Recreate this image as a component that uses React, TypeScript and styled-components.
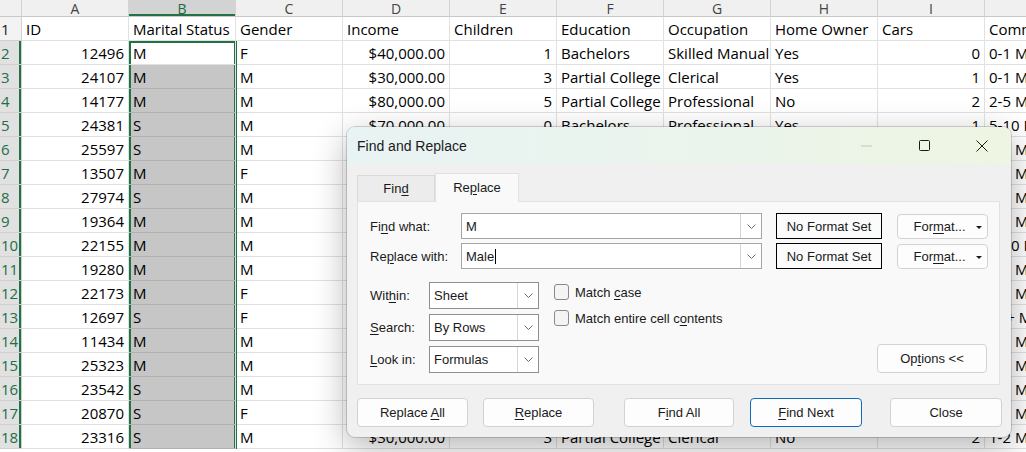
import React from 'react';
import styled, { createGlobalStyle } from 'styled-components';

const GlobalStyle = createGlobalStyle`
  html, body {
    margin: 0;
    padding: 0;
    background: #ffffff;
  }
  body {
    font-family: 'Open Sans', 'Liberation Sans', sans-serif;
  }
`;

// Spreadsheet

const Page = styled.div`
  position: relative;
  width: 1026px;
  height: 452px;
  overflow: hidden;
  background: #ffffff;
`;

const Sheet = styled.div`
  display: grid;
  grid-template-columns: 22px repeat(10, 107px);
  grid-template-rows: 17px repeat(18, 24px);
  font-family: 'Open Sans', 'Liberation Sans', sans-serif;
  font-size: 15px;
  color: #000000;
`;

const Corner = styled.div`
  background: #f0f0f0;
  border-right: 1px solid #d4d4d4;
  border-bottom: 1px solid #c8c8c8;
`;

const ColHeader = styled.div<{ $active?: boolean }>`
  display: flex;
  align-items: center;
  justify-content: center;
  font-size: 14px;
  line-height: 15px;
  color: ${p => (p.$active ? '#1d6b40' : '#444444')};
  background: ${p => (p.$active ? '#d3d3d3' : '#f0f0f0')};
  border-right: 1px solid #d4d4d4;
  border-bottom: 1px solid #c8c8c8;
  box-shadow: ${p => (p.$active ? 'inset 0 -2px 0 #217346' : 'none')};
`;

const RowHeader = styled.div<{ $selected?: boolean }>`
  display: flex;
  align-items: center;
  padding-left: 1px;
  font-size: 15px;
  color: ${p => (p.$selected ? '#1e6e48' : '#222222')};
  background: ${p => (p.$selected ? '#e1e1e1' : '#f3f3f3')};
  border-bottom: 1px solid #d0d0d0;
  border-right: 1px solid #d0d0d0;
  box-shadow: ${p => (p.$selected ? 'inset -2px 0 0 #217346' : 'none')};
`;

type CellProps = {
  $right?: boolean;
  $selected?: boolean;
  $activeCell?: boolean;
  $firstSelected?: boolean;
};

const Cell = styled.div<CellProps>`
  position: relative;
  display: flex;
  align-items: center;
  justify-content: ${p => (p.$right ? 'flex-end' : 'flex-start')};
  padding: 0 4px;
  overflow: hidden;
  white-space: nowrap;
  border-right: 1px solid #e1e1e1;
  border-bottom: 1px solid ${p => (p.$selected && !p.$activeCell ? '#b1b1b1' : '#e1e1e1')};
  background: ${p => (p.$selected && !p.$activeCell ? '#c6c6c6' : '#ffffff')};
  ${p =>
    p.$selected &&
    `
    z-index: 1;
    overflow: visible;
    box-shadow: inset 2px 0 0 #217346, inset -1px 0 0 #217346, 1px 0 0 #217346${
      p.$firstSelected ? ', inset 0 2px 0 #217346' : ''
    };
  `}
`;

// Dialog

const Dialog = styled.div`
  position: absolute;
  left: 347px;
  top: 127px;
  width: 664px;
  height: 310px;
  z-index: 5;
  display: flex;
  flex-direction: column;
  border-radius: 8px;
  overflow: hidden;
  background: #f0f0f0;
  box-shadow: 0 0 0 1px rgba(0, 0, 0, 0.16), 0 10px 34px rgba(0, 0, 0, 0.3);
  font-family: 'Liberation Sans', Arial, sans-serif;
  font-size: 13px;
  color: #1a1a1a;
`;

const TitleBar = styled.div`
  display: flex;
  align-items: center;
  height: 37px;
  flex-shrink: 0;
  background: linear-gradient(90deg, #e8f3f3 0%, #ebf4ec 55%, #eef5e2 100%);
`;

const Title = styled.div`
  flex: 1;
  padding-left: 10px;
  font-size: 14px;
  color: #1a1a1a;
`;

const WindowButton = styled.div`
  width: 58px;
  height: 100%;
  display: flex;
  align-items: center;
  justify-content: center;
`;

const Body = styled.div`
  display: flex;
  flex-direction: column;
  padding: 0 11px 0 10px;
`;

const TabStrip = styled.div`
  display: flex;
  align-items: flex-end;
  height: 37px;
`;

const Tab = styled.div<{ $active?: boolean }>`
  position: relative;
  z-index: ${p => (p.$active ? 2 : 1)};
  display: flex;
  align-items: center;
  justify-content: center;
  width: ${p => (p.$active ? '84px' : '78px')};
  height: ${p => (p.$active ? '29px' : '26px')};
  margin-bottom: ${p => (p.$active ? '-1px' : '0')};
  box-sizing: border-box;
  background: ${p => (p.$active ? '#f9f9f9' : '#ececec')};
  border: 1px solid ${p => (p.$active ? '#e2e2e2' : '#dadada')};
  border-bottom: none;
  padding-bottom: ${p => (p.$active ? '2px' : '0')};
`;

const Panel = styled.div`
  box-sizing: border-box;
  height: 184px;
  display: flex;
  flex-direction: column;
  padding: 11px 12px 11px 12px;
  background: #f9f9f9;
  border: 1px solid #e2e2e2;
`;

const FieldGrid = styled.div`
  display: grid;
  grid-template-columns: 77px 301px 106px 92px;
  grid-auto-rows: 26px;
  column-gap: 14px;
  row-gap: 4px;
  align-items: center;
`;

const Label = styled.div`
  white-space: nowrap;
`;

const Key = styled.span`
  text-decoration: underline;
  text-underline-offset: 2px;
`;

const Combo = styled.div<{ $wide?: boolean }>`
  box-sizing: border-box;
  display: flex;
  align-items: stretch;
  height: ${p => (p.$wide ? '26px' : '27px')};
  background: #ffffff;
  border: 1px solid ${p => (p.$wide ? '#a5a5a5' : '#8f8f8f')};
`;

const ComboText = styled.div`
  flex: 1;
  display: flex;
  align-items: center;
  padding-left: 4px;
  white-space: nowrap;
`;

const Caret = styled.span`
  display: inline-block;
  width: 1px;
  height: 15px;
  background: #000000;
  margin-left: 1px;
`;

const ComboArrow = styled.div`
  width: 20px;
  display: flex;
  align-items: center;
  justify-content: center;
  border-left: 1px solid #d6d6d6;
`;

const FormatBox = styled.div`
  box-sizing: border-box;
  height: 26px;
  display: flex;
  align-items: center;
  justify-content: center;
  border: 1px solid #000000;
  background: #fbfbfb;
  white-space: nowrap;
`;

const Button = styled.div<{ $primary?: boolean; $width?: number; $gap?: number }>`
  position: relative;
  box-sizing: border-box;
  flex-shrink: 0;
  width: ${p => (p.$width ? `${p.$width}px` : '100%')};
  height: 29px;
  margin-left: ${p => (p.$gap ? `${p.$gap}px` : '0')};
  display: flex;
  align-items: center;
  justify-content: center;
  background: #fdfdfd;
  border: 1px solid ${p => (p.$primary ? '#0f6cbd' : '#d2d2d2')};
  border-radius: 4px;
  white-space: nowrap;
`;

const SmallButton = styled(Button)`
  height: 25px;
  justify-self: end;
  width: 91px;
  padding-right: 6px;
`;

const DropTriangle = styled.span`
  position: absolute;
  right: 5px;
  top: 11px;
  width: 0;
  height: 0;
  border-left: 3px solid transparent;
  border-right: 3px solid transparent;
  border-top: 3px solid #1a1a1a;
`;

const Options = styled.div`
  display: flex;
  margin-top: 13px;
  flex: 1;
`;

const OptionGrid = styled.div`
  display: grid;
  grid-template-columns: 59px 110px;
  grid-auto-rows: 27px;
  row-gap: 5px;
  align-items: center;
`;

const Checks = styled.div`
  display: flex;
  flex-direction: column;
  gap: 10px;
  margin-left: 15px;
  padding-top: 2px;
`;

const CheckRow = styled.div`
  display: flex;
  align-items: center;
  gap: 6px;
  height: 16px;
`;

const CheckBox = styled.div`
  box-sizing: border-box;
  width: 15px;
  height: 16px;
  border: 1px solid #8a8a8a;
  border-radius: 3px;
  background: #f4f4f4;
`;

const OptionsButton = styled(Button)`
  margin-left: auto;
  align-self: flex-end;
`;

const Footer = styled.div`
  display: flex;
  margin-top: 13px;
  margin-right: -2px;
`;

// Data

const columns = ['A', 'B', 'C', 'D', 'E', 'F', 'G', 'H', 'I', 'J'];
const rightAligned = [0, 3, 4, 8];

const header = ['ID', 'Marital Status', 'Gender', 'Income', 'Children', 'Education', 'Occupation', 'Home Owner', 'Cars', 'Commute Distance'];

const rows: string[][] = [
  ['12496', 'M', 'F', '$40,000.00', '1', 'Bachelors', 'Skilled Manual', 'Yes', '0', '0-1 Miles'],
  ['24107', 'M', 'M', '$30,000.00', '3', 'Partial College', 'Clerical', 'Yes', '1', '0-1 Miles'],
  ['14177', 'M', 'M', '$80,000.00', '5', 'Partial College', 'Professional', 'No', '2', '2-5 Miles'],
  ['24381', 'S', 'M', '$70,000.00', '0', 'Bachelors', 'Professional', 'Yes', '1', '5-10 Miles'],
  ['25597', 'S', 'M', '$30,000.00', '0', 'Bachelors', 'Clerical', 'No', '0', '0-1 Miles'],
  ['13507', 'M', 'F', '$10,000.00', '2', 'Partial College', 'Manual', 'Yes', '0', '1-2 Miles'],
  ['27974', 'S', 'M', '$160,000.00', '2', 'High School', 'Management', 'Yes', '4', '0-1 Miles'],
  ['19364', 'M', 'M', '$40,000.00', '1', 'Bachelors', 'Skilled Manual', 'Yes', '0', '0-1 Miles'],
  ['22155', 'M', 'M', '$20,000.00', '2', 'Partial High School', 'Clerical', 'Yes', '2', '5-10 Miles'],
  ['19280', 'M', 'M', '$120,000.00', '2', 'Partial College', 'Manual', 'Yes', '1', '0-1 Miles'],
  ['22173', 'M', 'F', '$30,000.00', '3', 'High School', 'Skilled Manual', 'No', '2', '1-2 Miles'],
  ['12697', 'S', 'F', '$90,000.00', '0', 'Bachelors', 'Professional', 'No', '4', '10+ Miles'],
  ['11434', 'M', 'M', '$170,000.00', '5', 'Partial College', 'Professional', 'Yes', '0', '0-1 Miles'],
  ['25323', 'M', 'M', '$40,000.00', '2', 'Partial College', 'Clerical', 'Yes', '1', '1-2 Miles'],
  ['23542', 'S', 'M', '$60,000.00', '1', 'Partial College', 'Skilled Manual', 'No', '1', '0-1 Miles'],
  ['20870', 'S', 'F', '$10,000.00', '2', 'High School', 'Manual', 'Yes', '1', '0-1 Miles'],
  ['23316', 'S', 'M', '$30,000.00', '3', 'Partial College', 'Clerical', 'No', '2', '1-2 Miles']
];

const Chevron = () => (
  <svg width="9" height="5" viewBox="0 0 9 5">
    <path d="M0.5 0.5 L4.5 4.5 L8.5 0.5" fill="none" stroke="#6b6b6b" strokeWidth="1" />
  </svg>
);

const ComboField = ({ children, wide }: { children: React.ReactNode; wide?: boolean }) => (
  <Combo $wide={wide}>
    <ComboText>{children}</ComboText>
    <ComboArrow>
      <Chevron />
    </ComboArrow>
  </Combo>
);

const Spreadsheet = () => (
  <Sheet>
    <Corner />
    {columns.map(c => (
      <ColHeader key={c} $active={c === 'B'}>
        {c}
      </ColHeader>
    ))}
    <RowHeader>1</RowHeader>
    {header.map(h => (
      <Cell key={h}>{h}</Cell>
    ))}
    {rows.map((row, r) => (
      <React.Fragment key={row[0]}>
        <RowHeader $selected>{r + 2}</RowHeader>
        {row.map((v, i) => (
          <Cell
            key={i}
            $right={rightAligned.includes(i)}
            $selected={i === 1}
            $activeCell={i === 1 && r === 0}
            $firstSelected={i === 1 && r === 0}
          >
            {v}
          </Cell>
        ))}
      </React.Fragment>
    ))}
  </Sheet>
);

const FindReplaceDialog = () => (
  <Dialog>
    <TitleBar>
      <Title>Find and Replace</Title>
      <WindowButton>
        <svg width="11" height="2" viewBox="0 0 11 2">
          <line x1="0" y1="1" x2="11" y2="1" stroke="#c4c4c4" strokeWidth="1" />
        </svg>
      </WindowButton>
      <WindowButton>
        <svg width="11" height="11" viewBox="0 0 11 11">
          <rect x="0.5" y="0.5" width="10" height="10" rx="1" fill="none" stroke="#1a1a1a" strokeWidth="1" />
        </svg>
      </WindowButton>
      <WindowButton>
        <svg width="12" height="12" viewBox="0 0 12 12">
          <path d="M0.5 0.5 L11.5 11.5 M11.5 0.5 L0.5 11.5" stroke="#1a1a1a" strokeWidth="1" />
        </svg>
      </WindowButton>
    </TitleBar>
    <Body>
      <TabStrip>
        <Tab>
          <span>
            Fin<Key>d</Key>
          </span>
        </Tab>
        <Tab $active>
          <span>
            Re<Key>p</Key>lace
          </span>
        </Tab>
      </TabStrip>
      <Panel>
        <FieldGrid>
          <Label>
            Fi<Key>n</Key>d what:
          </Label>
          <ComboField wide>M</ComboField>
          <FormatBox>No Format Set</FormatBox>
          <SmallButton>
            <span>
              For<Key>m</Key>at...
            </span>
            <DropTriangle />
          </SmallButton>
          <Label>
            Re<Key>p</Key>lace with:
          </Label>
          <ComboField wide>
            Male
            <Caret />
          </ComboField>
          <FormatBox>No Format Set</FormatBox>
          <SmallButton>
            <span>
              For<Key>m</Key>at...
            </span>
            <DropTriangle />
          </SmallButton>
        </FieldGrid>
        <Options>
          <OptionGrid>
            <Label>
              Wit<Key>h</Key>in:
            </Label>
            <ComboField>Sheet</ComboField>
            <Label>
              <Key>S</Key>earch:
            </Label>
            <ComboField>By Rows</ComboField>
            <Label>
              <Key>L</Key>ook in:
            </Label>
            <ComboField>Formulas</ComboField>
          </OptionGrid>
          <Checks>
            <CheckRow>
              <CheckBox />
              <span>
                Match <Key>c</Key>ase
              </span>
            </CheckRow>
            <CheckRow>
              <CheckBox />
              <span>
                Match entire cell c<Key>o</Key>ntents
              </span>
            </CheckRow>
          </Checks>
          <OptionsButton $width={110}>
            <span>
              Op<Key>t</Key>ions &lt;&lt;
            </span>
          </OptionsButton>
        </Options>
      </Panel>
      <Footer>
        <Button $width={111}>
          <span>
            Replace <Key>A</Key>ll
          </span>
        </Button>
        <Button $width={111} $gap={15}>
          <span>
            <Key>R</Key>eplace
          </span>
        </Button>
        <Button $width={110} $gap={30}>
          <span>
            F<Key>i</Key>nd All
          </span>
        </Button>
        <Button $width={112} $gap={16} $primary>
          <span>
            <Key>F</Key>ind Next
          </span>
        </Button>
        <Button $width={112} $gap={28}>
          Close
        </Button>
      </Footer>
    </Body>
  </Dialog>
);

export default function App() {
  return (
    <>
      <GlobalStyle />
      <Page>
        <Spreadsheet />
        <FindReplaceDialog />
      </Page>
    </>
  );
}
